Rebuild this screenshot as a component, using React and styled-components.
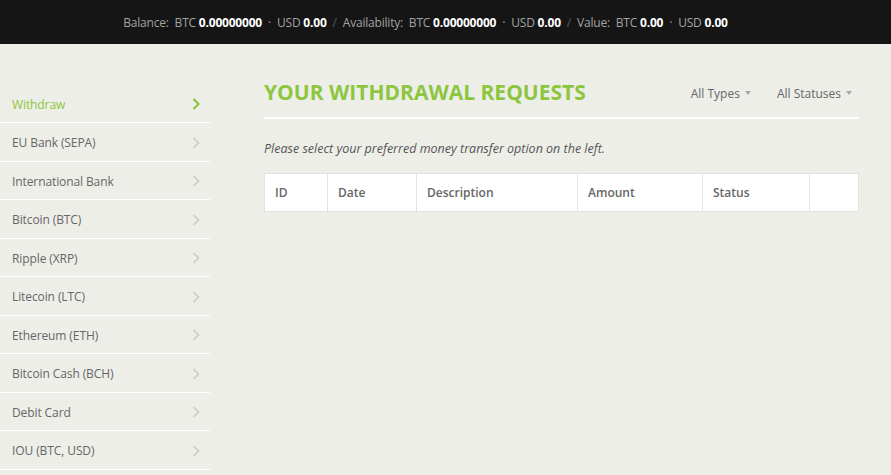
import React from "react";
import styled, { createGlobalStyle } from "styled-components";

const Global = createGlobalStyle`
  html, body { margin: 0; padding: 0; background: #eeeee9; }
  body { font-family: "Open Sans", "Liberation Sans", sans-serif; }
  * { box-sizing: border-box; }
`;

const Page = styled.div`
  width: 891px;
  min-height: 475px;
  background: #eeeee9;
`;

const TopBar = styled.div`
  height: 44px;
  background: #151515;
  display: flex;
  align-items: center;
  justify-content: center;
  padding-right: 40px;
  font-size: 12px;
  color: #a3a3a3;
  letter-spacing: -0.2px;
  white-space: pre;
`;

const Val = styled.b`
  color: #fff;
  font-weight: 700;
`;

const Sep = styled.span`
  color: #5a5a5a;
  margin: 0 6px;
`;

const Dot = styled.span`
  margin: 0 6px;
`;

const Body = styled.div`
  display: flex;
  padding-top: 31px;
  padding-right: 33px;
  gap: 54px;
`;

const Sidebar = styled.nav`
  width: 210px;
  flex: none;
  display: flex;
  flex-direction: column;
  margin-top: 9.5px;
`;

const NavItem = styled.div`
  height: 38.5px;
  padding: 2px 10px 0 12px;
  display: flex;
  align-items: center;
  justify-content: space-between;
  border-bottom: 1.5px solid #ffffff;
  font-size: 12px;
  letter-spacing: -0.1px;
  color: ${(p) => (p.$active ? "#8cc63e" : "#666666")};
`;

const Chevron = ({ active }) => (
  <svg width="8" height="12" viewBox="0 0 8 12">
    <path
      d="M1.5 1 L6.5 6 L1.5 11"
      fill="none"
      stroke={active ? "#8cc63e" : "#cacac6"}
      strokeWidth={active ? 2.2 : 1.6}
    />
  </svg>
);

const Main = styled.main`
  flex: 1;
  display: flex;
  flex-direction: column;
`;

const HeaderRow = styled.div`
  display: flex;
  align-items: center;
  justify-content: space-between;
  height: 34px;
  padding-bottom: 8px;
  border-bottom: 2px solid #ffffff;
  box-sizing: content-box;
`;

const Title = styled.h1`
  margin: 0;
  font-size: 21px;
  font-weight: 700;
  color: #8cc63e;
`;

const Filters = styled.div`
  display: flex;
  gap: 26px;
  padding-right: 7px;
  padding-top: 2px;
`;

const Filter = styled.span`
  font-size: 12px;
  color: #666666;
  display: flex;
  align-items: center;
  gap: 5px;
  &::after {
    content: "";
    border-left: 3.5px solid transparent;
    border-right: 3.5px solid transparent;
    border-top: 4px solid #a8a8a8;
  }
`;

const Note = styled.p`
  margin: 21px 0 0;
  font-size: 12.5px;
  font-style: italic;
  color: #555;
`;

const Table = styled.table`
  margin-top: 16px;
  border-collapse: collapse;
  background: #fff;
  width: 100%;
  table-layout: fixed;
`;

const Th = styled.th`
  height: 38px;
  border: 1px solid #e2e2de;
  text-align: left;
  font-weight: 600;
  font-size: 12px;
  color: #666;
  padding: 0 10px;
  width: ${(p) => p.$w}px;
`;

const items = [
  "Withdraw",
  "EU Bank (SEPA)",
  "International Bank",
  "Bitcoin (BTC)",
  "Ripple (XRP)",
  "Litecoin (LTC)",
  "Ethereum (ETH)",
  "Bitcoin Cash (BCH)",
  "Debit Card",
  "IOU (BTC, USD)",
];

const cols = [
  ["ID", 63],
  ["Date", 89],
  ["Description", 161],
  ["Amount", 125],
  ["Status", 107],
  ["", 49],
];

export default function App() {
  return (
    <Page>
      <Global />
      <TopBar>
        Balance:  BTC <Val>0.00000000</Val>
        <Dot>·</Dot>USD <Val>0.00</Val>
        <Sep>/</Sep>Availability:  BTC <Val>0.00000000</Val>
        <Dot>·</Dot>USD <Val>0.00</Val>
        <Sep>/</Sep>Value:  BTC <Val>0.00</Val>
        <Dot>·</Dot>USD <Val>0.00</Val>
      </TopBar>
      <Body>
        <Sidebar>
          {items.map((t, i) => (
            <NavItem key={t} $active={i === 0}>
              <span>{t}</span>
              <Chevron active={i === 0} />
            </NavItem>
          ))}
        </Sidebar>
        <Main>
          <HeaderRow>
            <Title>YOUR WITHDRAWAL REQUESTS</Title>
            <Filters>
              <Filter>All Types</Filter>
              <Filter>All Statuses</Filter>
            </Filters>
          </HeaderRow>
          <Note>Please select your preferred money transfer option on the left.</Note>
          <Table>
            <thead>
              <tr>
                {cols.map(([c, w], i) => (
                  <Th key={i} $w={w}>{c}</Th>
                ))}
              </tr>
            </thead>
          </Table>
        </Main>
      </Body>
    </Page>
  );
}
